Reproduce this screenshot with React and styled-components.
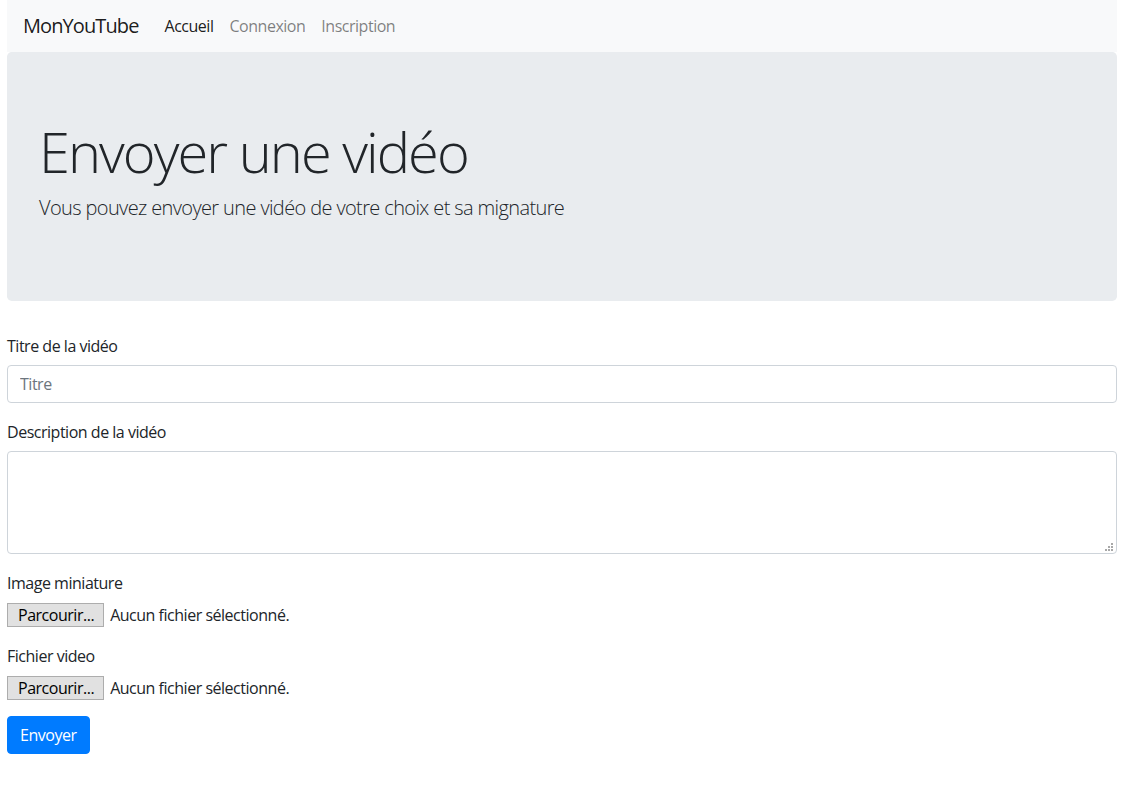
import React from 'react';
import styled, { createGlobalStyle } from 'styled-components';

const GlobalStyle = createGlobalStyle`
  * {
    box-sizing: border-box;
  }
  body {
    margin: 0;
    background: #fff;
    color: #212529;
    font-family: "Open Sans", "Noto Sans", sans-serif;
    font-size: 16px;
    line-height: 1.5;
    letter-spacing: -0.03em;
  }
`;

const Page = styled.div`
  width: 1110px;
  margin-left: 7px;
`;

const Navbar = styled.nav`
  display: flex;
  align-items: center;
  height: 52px;
  padding: 8px 16px;
  background: #f8f9fa;
`;

const Brand = styled.a`
  margin-right: 18px;
  font-size: 20px;
  line-height: 30px;
  letter-spacing: -0.045em;
  color: rgba(0, 0, 0, 0.9);
  text-decoration: none;
`;

const NavLink = styled.a`
  padding: 8px;
  color: ${({ active }) => (active ? 'rgba(0, 0, 0, 0.9)' : 'rgba(0, 0, 0, 0.5)')};
  text-decoration: none;
`;

const Jumbotron = styled.header`
  margin-bottom: 32px;
  padding: 66px 32px 62px;
  background: #e9ecef;
  border-radius: 4.8px;
`;

const Title = styled.h1`
  margin: 0 0 8px;
  font-size: 56px;
  font-weight: 300;
  line-height: 1.2;
  letter-spacing: -0.035em;
`;

const Lead = styled.p`
  margin: 0 0 16px;
  font-size: 20px;
  font-weight: 300;
  line-height: 30px;
  letter-spacing: -0.031em;
`;

const FormGroup = styled.div`
  margin-bottom: 16px;
`;

const Label = styled.label`
  display: block;
  margin-bottom: 8px;
  padding-top: 1px;
  height: 24px;
`;

const Input = styled.input`
  display: block;
  width: 100%;
  height: 38px;
  padding: 6px 12px;
  font: inherit;
  letter-spacing: inherit;
  color: #495057;
  border: 1px solid #ced4da;
  border-radius: 4px;
  background: #fff;
  &::placeholder {
    color: #6c757d;
  }
`;

const AreaWrap = styled.div`
  position: relative;
`;

const TextArea = styled.textarea`
  display: block;
  width: 100%;
  height: 103px;
  padding: 6px 12px;
  font: inherit;
  color: #495057;
  border: 1px solid #ced4da;
  border-radius: 4px;
  resize: none;
`;

const Grip = styled.svg`
  position: absolute;
  right: 4px;
  bottom: 3px;
  width: 8px;
  height: 8px;
  pointer-events: none;
`;

const FileRow = styled.div`
  display: flex;
  align-items: center;
  height: 25px;
  gap: 6px;
`;

const FileButton = styled.span`
  display: inline-flex;
  align-items: center;
  height: 24px;
  padding: 0 9px 0 10px;
  background: #e1e1e1;
  border: 1px solid #adadad;
  color: #000;
  line-height: 1;
`;

const FileName = styled.span`
  color: #212529;
`;

const SubmitButton = styled.button`
  height: 38px;
  padding: 6px 12px;
  font: inherit;
  letter-spacing: inherit;
  color: #fff;
  background: #007bff;
  border: 1px solid #007bff;
  border-radius: 4px;
`;

function FileField({ label }) {
  return (
    <FormGroup>
      <Label>{label}</Label>
      <FileRow>
        <FileButton>Parcourir...</FileButton>
        <FileName>Aucun fichier sélectionné.</FileName>
      </FileRow>
    </FormGroup>
  );
}

export default function App() {
  return (
    <Page>
      <GlobalStyle />
      <Navbar>
        <Brand href="#">MonYouTube</Brand>
        <NavLink href="#" active>Accueil</NavLink>
        <NavLink href="#">Connexion</NavLink>
        <NavLink href="#">Inscription</NavLink>
      </Navbar>
      <Jumbotron>
        <Title>Envoyer une vidéo</Title>
        <Lead>Vous pouvez envoyer une vidéo de votre choix et sa mignature</Lead>
      </Jumbotron>
      <form>
        <FormGroup>
          <Label>Titre de la vidéo</Label>
          <Input type="text" placeholder="Titre" />
        </FormGroup>
        <FormGroup>
          <Label>Description de la vidéo</Label>
          <AreaWrap>
            <TextArea />
            <Grip viewBox="0 0 8 8">
              <g fill="#a8a8a8">
                <rect x="6" y="0" width="2" height="2" />
                <rect x="3" y="3" width="2" height="2" />
                <rect x="6" y="3" width="2" height="2" />
                <rect x="0" y="6" width="2" height="2" />
                <rect x="3" y="6" width="2" height="2" />
                <rect x="6" y="6" width="2" height="2" />
              </g>
            </Grip>
          </AreaWrap>
        </FormGroup>
        <FileField label="Image miniature" />
        <FileField label="Fichier video" />
        <SubmitButton type="button">Envoyer</SubmitButton>
      </form>
    </Page>
  );
}
